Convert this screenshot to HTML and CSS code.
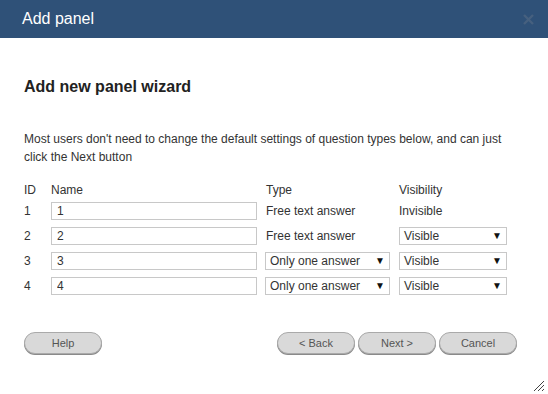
FILE: index.html
```html
<!DOCTYPE html>
<html lang="en">
<head>
  <meta charset="UTF-8"/>
  <title>Add panel</title>
  <link rel="stylesheet" href="styles.css">
</head>
<body>

<div class="dialog">
  <header class="titlebar">
    <span class="title">Add panel</span>
    <svg class="close" width="11" height="11" viewBox="0 0 11 11">
      <path d="M1 1 L10 10 M10 1 L1 10" stroke="#46607f" stroke-width="2.4"/>
    </svg>
  </header>

  <div class="content">
    <h2>Add new panel wizard</h2>
    <p class="intro">Most users don't need to change the default settings of question types below, and can just click the Next button</p>

    <table class="grid">
      <tr class="head">
        <td class="c-id">ID</td>
        <td class="c-name">Name</td>
        <td class="c-type">Type</td>
        <td class="c-vis">Visibility</td>
      </tr>
      <tr>
        <td>1</td>
        <td><input class="name" type="text" value="1"></td>
        <td>Free text answer</td>
        <td>Invisible</td>
      </tr>
      <tr>
        <td>2</td>
        <td><input class="name" type="text" value="2"></td>
        <td>Free text answer</td>
        <td><div class="select vis">Visible<span class="arrow">&#9660;</span></div></td>
      </tr>
      <tr>
        <td>3</td>
        <td><input class="name" type="text" value="3"></td>
        <td><div class="select type">Only one answer<span class="arrow">&#9660;</span></div></td>
        <td><div class="select vis">Visible<span class="arrow">&#9660;</span></div></td>
      </tr>
      <tr>
        <td>4</td>
        <td><input class="name" type="text" value="4"></td>
        <td><div class="select type">Only one answer<span class="arrow">&#9660;</span></div></td>
        <td><div class="select vis">Visible<span class="arrow">&#9660;</span></div></td>
      </tr>
    </table>

    <div class="buttons">
      <button class="btn">Help</button>
      <div class="right">
        <button class="btn">&lt; Back</button>
        <button class="btn">Next &gt;</button>
        <button class="btn">Cancel</button>
      </div>
    </div>
  </div>

  <svg class="grip" width="12" height="12" viewBox="0 0 12 12">
    <path d="M11 1 L1 11 M11 5 L5 11 M11 9 L9 11" stroke="#444" stroke-width="1"/>
  </svg>
</div>

</body>
</html>
```

FILE: styles.css
```css
body {
  margin: 0;
  font-family: 'Liberation Sans', Arial, sans-serif;
  background: #fff;
  color: #333;
}
.dialog {
  position: relative;
  width: 548px;
  height: 394px;
  overflow: hidden;
}
.titlebar {
  height: 38px;
  background: #2f5178;
  display: flex;
  align-items: center;
  justify-content: space-between;
  padding: 0 14px 0 22px;
}
.title {
  color: #fff;
  font-size: 16px;
}
.content {
  padding: 0 24px;
}
h2 {
  margin: 40px 0 0;
  font-size: 16px;
  font-weight: bold;
  color: #222;
}
.intro {
  margin: 34px 0 0;
  font-size: 12px;
  line-height: 18px;
}
.grid {
  margin-top: 17px;
  border-collapse: collapse;
  font-size: 12px;
}
.grid td {
  padding: 0;
  height: 25px;
  vertical-align: middle;
}
.grid .head td {
  height: 15px;
  vertical-align: top;
}
.c-id { width: 27px; }
.c-name { width: 215px; }
.c-type { width: 133px; }
input.name {
  box-sizing: border-box;
  width: 206px;
  height: 18px;
  margin: 0;
  border: 1px solid #c8c8c8;
  padding: 0 5px;
  font: 12px 'Liberation Sans', Arial, sans-serif;
  color: #333;
}
.select {
  box-sizing: border-box;
  height: 18px;
  border: 1px solid #c8c8c8;
  padding: 0 0 0 4px;
  display: flex;
  align-items: center;
  justify-content: space-between;
  font-size: 12px;
}
.select.type {
  width: 125px;
  margin-left: -1px;
}
.select.vis { width: 108px; }
.arrow {
  font-size: 10px;
  width: 18px;
  text-align: center;
  color: #111;
}
.buttons {
  display: flex;
  justify-content: space-between;
  margin-top: 34px;
  padding-right: 7px;
}
.right {
  display: flex;
  gap: 3px;
}
.btn {
  width: 78px;
  height: 22px;
  border: 1px solid #aaa;
  border-radius: 11px;
  background: #d9d9d9;
  box-shadow: 0 1px 0 #8a8a8a;
  font: 11px 'Liberation Sans', Arial, sans-serif;
  color: #555;
  padding: 0;
}
.grip {
  position: absolute;
  right: 3px;
  bottom: 2px;
}
```
